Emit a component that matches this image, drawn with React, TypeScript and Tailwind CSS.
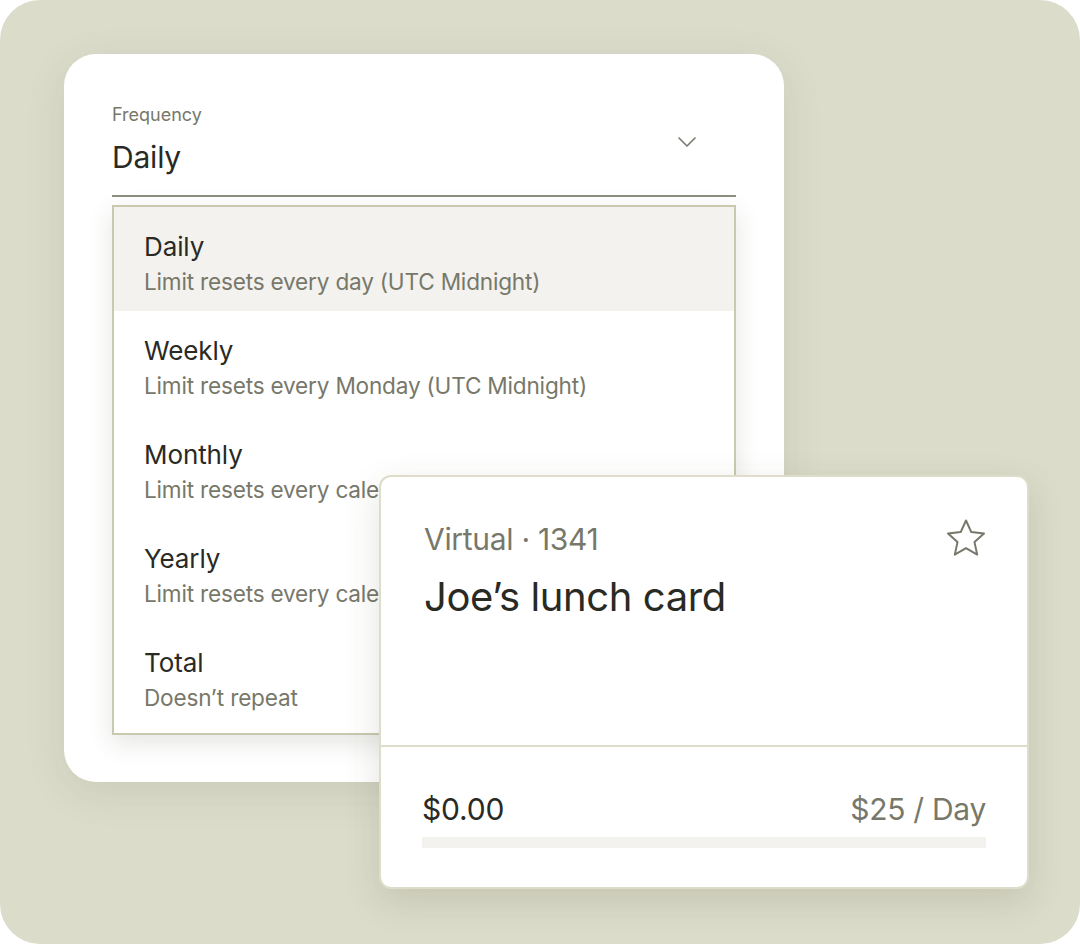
import React from 'react';

const options = [
  { title: 'Daily', desc: 'Limit resets every day (UTC Midnight)', active: true },
  { title: 'Weekly', desc: 'Limit resets every Monday (UTC Midnight)' },
  { title: 'Monthly', desc: 'Limit resets every calendar month (UTC Midnight)' },
  { title: 'Yearly', desc: 'Limit resets every calendar year (UTC Midnight)' },
  { title: 'Total', desc: 'Doesn’t repeat' },
];

function Chevron() {
  return (
    <svg width="18" height="10" viewBox="0 0 18 10" fill="none">
      <path d="M1 1l8 8 8-8" stroke="#77786a" strokeWidth="1.6" strokeLinecap="round" strokeLinejoin="round" />
    </svg>
  );
}

function StarIcon() {
  return (
    <svg width="42" height="40" viewBox="0 0 42 40" fill="none">
      <path
        d="M21 2.5l5.3 11.6 12.7 1.4-9.5 8.6 2.7 12.5L21 30.2 9.8 36.6l2.7-12.5L3 15.5l12.7-1.4z"
        stroke="#77786a"
        strokeWidth="2"
        strokeLinejoin="round"
      />
    </svg>
  );
}

export default function App() {
  return (
    <div
      className="relative w-[1080px] h-[944px] overflow-hidden rounded-[40px] bg-[#dcdccb] pt-[54px] pl-[64px]"
      style={{ fontFamily: 'Inter, "Noto Sans", sans-serif' }}
    >
      {/* Frequency panel */}
      <div className="w-[720px] h-[728px] rounded-[32px] bg-white px-[48px] pt-[51px] shadow-[0_10px_40px_rgba(60,60,40,0.10)]">
        <div className="text-[18px] leading-[20px] text-[#77786a]">Frequency</div>
        <div className="flex items-start justify-between border-b-2 border-[#8f8f7e] pt-[14px] pb-[20px] pr-[40px]">
          <span className="text-[30px] leading-[36px] text-[#2a2a25] tracking-[-0.2px]">Daily</span>
          <span className="mt-[-2px]">
            <Chevron />
          </span>
        </div>

        {/* Dropdown */}
        <div className="mt-[8px] border-2 border-[#c9c9b0] bg-white pb-[6px] shadow-[0_8px_24px_rgba(40,40,20,0.12)]">
          {options.map((o) => (
            <div
              key={o.title}
              className={`h-[104px] px-[30px] pt-[24px] whitespace-nowrap overflow-hidden ${o.active ? 'bg-[#f3f2ee] h-[102px]' : ''}`}
            >
              <div className="text-[26px] leading-[32px] text-[#2a2a25] tracking-[-0.1px]">{o.title}</div>
              <div className="mt-[5px] text-[22.6px] leading-[28px] text-[#77786a] tracking-[-0.2px]">{o.desc}</div>
            </div>
          ))}
        </div>
      </div>

      {/* Card overlay */}
      <div className="absolute left-[379px] top-[475px] w-[650px] h-[414px] flex flex-col rounded-[12px] border-2 border-[#deddca] bg-white shadow-[0_12px_36px_rgba(60,60,30,0.14)]">
        <div className="flex-1 flex justify-between px-[43px] pt-[42px] pr-[40px] border-b-2 border-[#deddca]">
          <div>
            <div className="text-[30px] leading-[40px] text-[#77786a] tracking-[-0.3px]">Virtual · 1341</div>
            <div className="mt-[14px] text-[40px] leading-[48px] text-[#2a2a25] tracking-[-0.4px]">Joe’s lunch card</div>
          </div>
          <div className="mt-[-1px]">
            <StarIcon />
          </div>
        </div>
        <div className="h-[140px] px-[41px] pt-[42px]">
          <div className="flex items-end justify-between">
            <span className="text-[30px] leading-[40px] text-[#2a2a25] tracking-[-0.2px]">$0.00</span>
            <span className="text-[30px] leading-[40px] text-[#77786a] tracking-[-0.3px]">$25 / Day</span>
          </div>
          <div className="mt-[8px] h-[11px] bg-[#f3f2ee]" />
        </div>
      </div>
    </div>
  );
}
